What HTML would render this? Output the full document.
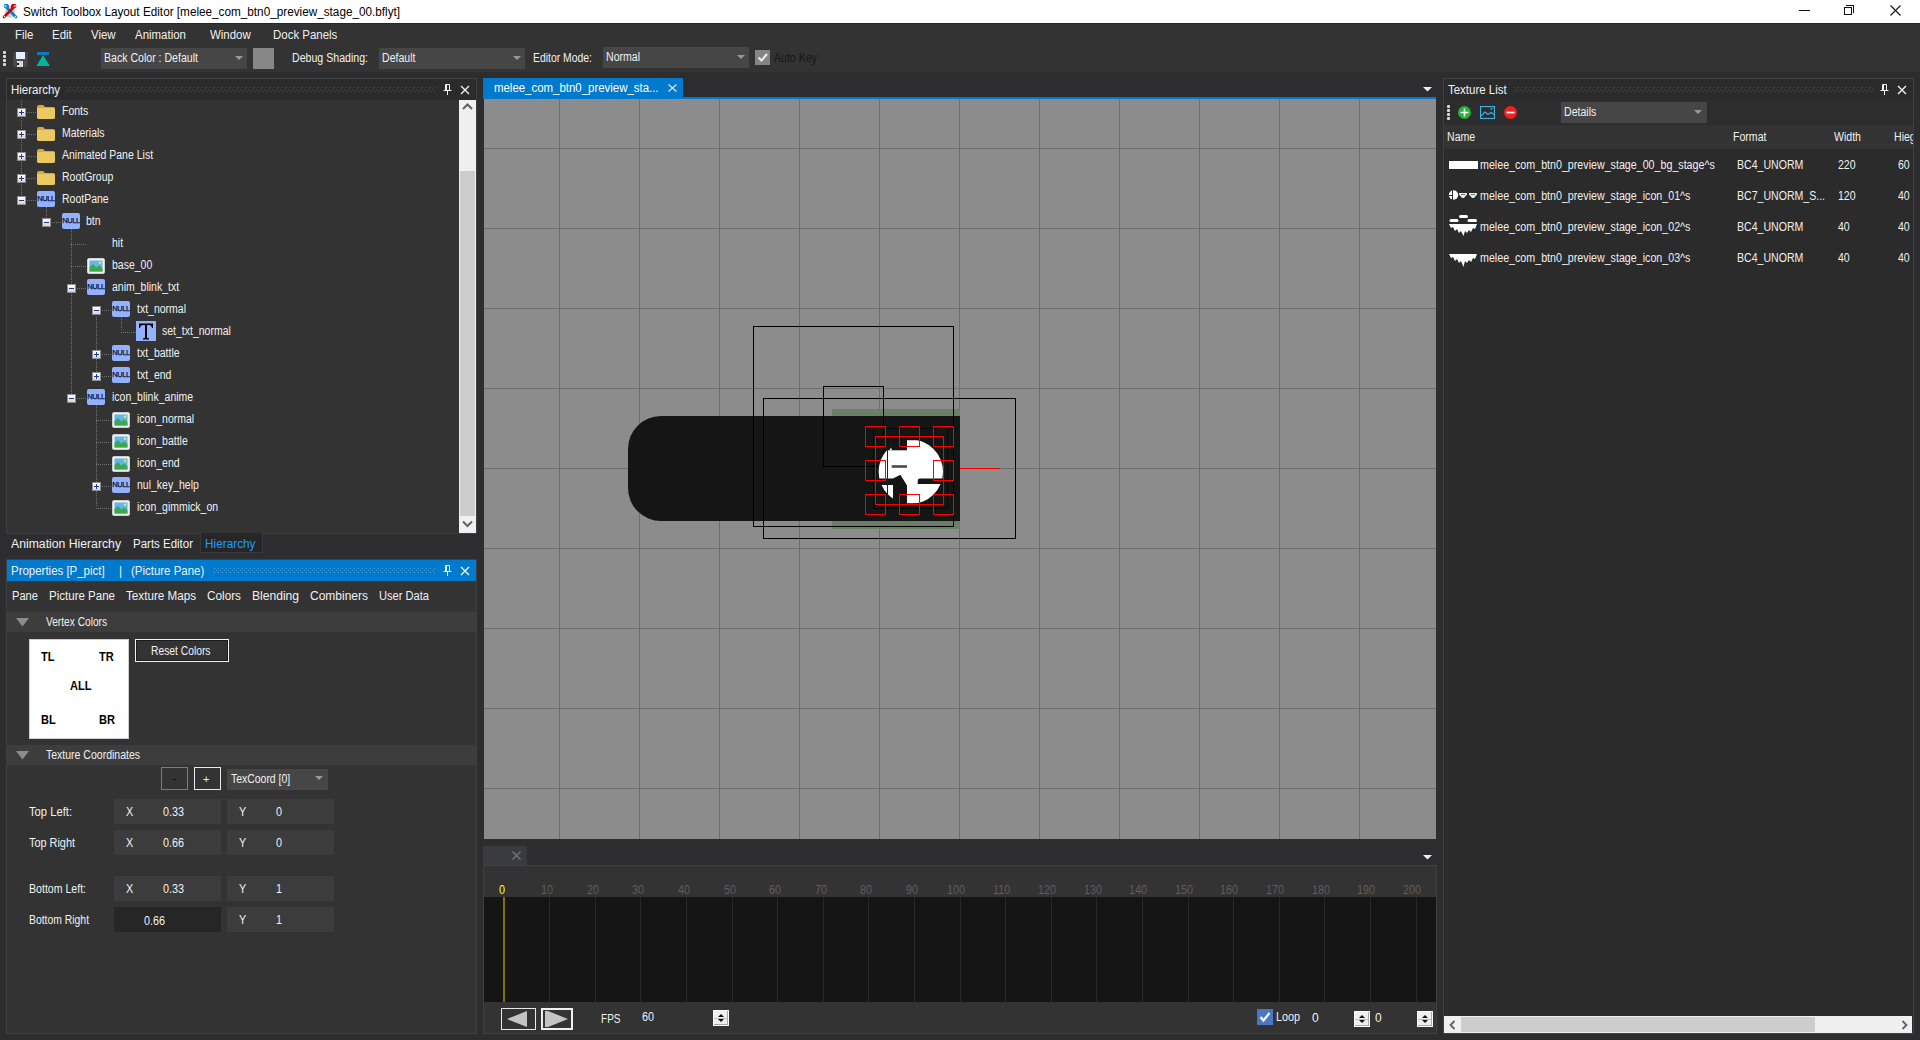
<!DOCTYPE html><html><head><meta charset="utf-8"><style>html,body{margin:0;padding:0;width:1920px;height:1040px;overflow:hidden;background:#2d2d30;font-family:"Liberation Sans",sans-serif;position:relative}body div{position:absolute;box-sizing:border-box}</style></head><body>
<div style="left:0px;top:0px;width:1920px;height:23px;background:#fff"></div>
<div style="left:23px;top:5.34px;line-height:15px;font-size:12px;color:#000;white-space:nowrap;transform:scaleX(0.9786);transform-origin:0 0;">Switch Toolbox Layout Editor [melee_com_btn0_preview_stage_00.bflyt]</div>
<svg style="position:absolute;left:0px;top:0px;" width="22" height="22" viewBox="0 0 22 22"><circle cx="10" cy="12.5" r="5.2" fill="#cfcfcf"/>
<path d="M6.5 7.5 L16 17" stroke="#0b80c9" stroke-width="2.6" stroke-linecap="round"/>
<path d="M3.5 6 L4.5 4 H8 L9.5 6.5 L8.5 9 L6 8.5 L4 7.5Z" fill="#0b8ad6"/><path d="M4 5.5 L6 5.5 L6.5 6.5 L5 7Z" fill="#fff"/>
<path d="M13.5 7.5 L4 17" stroke="#d40000" stroke-width="2.6" stroke-linecap="round"/>
<path d="M16.5 6 L15.5 4 H12 L10.5 6.5 L11.5 9 L14 8.5 L16 7.5Z" fill="#e00000"/><path d="M16 5.5 L14 5.5 L13.5 6.5 L15 7Z" fill="#fff"/>
<circle cx="4.5" cy="16.5" r="0.7" fill="#fff"/><circle cx="15.5" cy="16.5" r="0.7" fill="#fff"/></svg>
<div style="left:1799px;top:10px;width:11px;height:1px;background:#111"></div>
<div style="left:1844px;top:7px;width:8px;height:8px;border:1px solid #111"></div>
<div style="left:1846px;top:5px;width:8px;height:8px;border-top:1px solid #111;border-right:1px solid #111"></div>
<svg style="position:absolute;left:1890px;top:5px;" width="11" height="11" viewBox="0 0 11 11"><path d="M0.5 0.5 L10.5 10.5 M10.5 0.5 L0.5 10.5" stroke="#111" stroke-width="1.1"/></svg>
<div style="left:0px;top:23px;width:1920px;height:49px;background:#333333"></div>
<div style="left:0px;top:23px;width:1920px;height:1px;background:#262626"></div>
<div style="left:15px;top:28.34px;line-height:15px;font-size:12px;color:#f1f1f1;white-space:nowrap;transform:scaleX(0.9550);transform-origin:0 0;">File</div>
<div style="left:52px;top:28.34px;line-height:15px;font-size:12px;color:#f1f1f1;white-space:nowrap;transform:scaleX(0.9550);transform-origin:0 0;">Edit</div>
<div style="left:91px;top:28.34px;line-height:15px;font-size:12px;color:#f1f1f1;white-space:nowrap;transform:scaleX(0.9550);transform-origin:0 0;">View</div>
<div style="left:135px;top:28.34px;line-height:15px;font-size:12px;color:#f1f1f1;white-space:nowrap;transform:scaleX(0.9550);transform-origin:0 0;">Animation</div>
<div style="left:210px;top:28.34px;line-height:15px;font-size:12px;color:#f1f1f1;white-space:nowrap;transform:scaleX(0.9550);transform-origin:0 0;">Window</div>
<div style="left:273px;top:28.34px;line-height:15px;font-size:12px;color:#f1f1f1;white-space:nowrap;transform:scaleX(0.9550);transform-origin:0 0;">Dock Panels</div>
<div style="left:3px;top:51px;width:3px;height:3px;background:#ddd;border-radius:1px"></div>
<div style="left:3px;top:55px;width:3px;height:3px;background:#ddd;border-radius:1px"></div>
<div style="left:3px;top:59px;width:3px;height:3px;background:#ddd;border-radius:1px"></div>
<div style="left:3px;top:63px;width:3px;height:3px;background:#ddd;border-radius:1px"></div>
<svg style="position:absolute;left:13px;top:51px;" width="15" height="17" viewBox="0 0 15 17"><rect x="0.5" y="1" width="14" height="15" rx="1" fill="#4a4a4a"/>
<rect x="3" y="1" width="9" height="7" fill="#e6eefa"/><rect x="4" y="10" width="6" height="6" fill="#d8d8d8"/>
<rect x="4" y="12" width="2" height="2" fill="#222"/></svg>
<svg style="position:absolute;left:36px;top:51px;" width="15" height="17" viewBox="0 0 15 17"><rect x="1" y="1" width="12" height="3" fill="#0a7bbd"/><path d="M7 4 L14 15 L0.5 15Z" fill="#00b4a0"/></svg>
<div style="left:101px;top:48px;width:146px;height:21px;background:#464646"></div>
<div style="left:104px;top:51.34px;line-height:15px;font-size:12px;color:#f1f1f1;white-space:nowrap;transform:scaleX(0.8800);transform-origin:0 0;">Back Color : Default</div>
<svg style="position:absolute;left:235px;top:56px;" width="8" height="5" viewBox="0 0 8 5"><path d="M0 0 L8 0 L4 4Z" fill="#999"/></svg>
<div style="left:253px;top:48px;width:21px;height:21px;background:#878787"></div>
<div style="left:292px;top:51.34px;line-height:15px;font-size:12px;color:#f1f1f1;white-space:nowrap;transform:scaleX(0.8832);transform-origin:0 0;">Debug Shading:</div>
<div style="left:379px;top:48px;width:146px;height:21px;background:#464646"></div>
<div style="left:382px;top:51.34px;line-height:15px;font-size:12px;color:#f1f1f1;white-space:nowrap;transform:scaleX(0.8800);transform-origin:0 0;">Default</div>
<svg style="position:absolute;left:513px;top:56px;" width="8" height="5" viewBox="0 0 8 5"><path d="M0 0 L8 0 L4 4Z" fill="#999"/></svg>
<div style="left:533px;top:51.34px;line-height:15px;font-size:12px;color:#f1f1f1;white-space:nowrap;transform:scaleX(0.8674);transform-origin:0 0;">Editor Mode:</div>
<div style="left:603px;top:47px;width:146px;height:21px;background:#464646"></div>
<div style="left:606px;top:50.34px;line-height:15px;font-size:12px;color:#f1f1f1;white-space:nowrap;transform:scaleX(0.8800);transform-origin:0 0;">Normal</div>
<svg style="position:absolute;left:737px;top:55px;" width="8" height="5" viewBox="0 0 8 5"><path d="M0 0 L8 0 L4 4Z" fill="#999"/></svg>
<div style="left:755px;top:50px;width:15px;height:15px;background:#858585"></div>
<svg style="position:absolute;left:756px;top:51px;" width="13" height="13" viewBox="0 0 13 13"><path d="M2.5 6.5 L5.5 9.5 L11 3" stroke="#ececec" stroke-width="2" fill="none"/></svg>
<div style="left:774px;top:51.34px;line-height:15px;font-size:12px;color:#161616;white-space:nowrap;transform:scaleX(0.8800);transform-origin:0 0;">Auto Key</div>
<div style="left:6px;top:78px;width:471px;height:456px;border:1px solid #3f3f46;background:#333333"></div>
<div style="left:7px;top:79px;width:469px;height:21px;background:#2b2b2c"></div>
<div style="left:11px;top:83.34px;line-height:15px;font-size:12px;color:#f1f1f1;white-space:nowrap;transform:scaleX(0.9550);transform-origin:0 0;">Hierarchy</div>
<svg style="position:absolute;left:66px;top:87px;" width="370" height="5" viewBox="0 0 370 5"><defs><pattern id="p7_79" width="4" height="4" patternUnits="userSpaceOnUse"><rect x="0" y="0" width="1" height="1" fill="#505053"/><rect x="2" y="2" width="1" height="1" fill="#505053"/></pattern></defs><rect width="370" height="5" fill="url(#p7_79)"/></svg>
<svg style="position:absolute;left:443px;top:84px;" width="9" height="12" viewBox="0 0 9 12"><path d="M2.5 0.5 H6.5 V6.5 H2.5Z" fill="none" stroke="#f1f1f1"/><path d="M3.5 1 V6" stroke="#f1f1f1"/><path d="M0.5 6.5 H8.5" stroke="#f1f1f1"/><path d="M4.5 6.5 V11" stroke="#f1f1f1"/></svg>
<svg style="position:absolute;left:460px;top:85px;" width="10" height="10" viewBox="0 0 10 10"><path d="M1 1 L9 9 M9 1 L1 9" stroke="#f1f1f1" stroke-width="1.4"/></svg>
<div style="left:459px;top:100px;width:17px;height:433px;background:#f0f0f0"></div>
<div style="left:460px;top:171px;width:15px;height:345px;background:#cdcdcd"></div>
<svg style="position:absolute;left:462px;top:103px;" width="11" height="8" viewBox="0 0 11 8"><path d="M1 6 L5.5 1.5 L10 6" stroke="#606060" stroke-width="2" fill="none"/></svg>
<svg style="position:absolute;left:462px;top:520px;" width="11" height="8" viewBox="0 0 11 8"><path d="M1 1.5 L5.5 6 L10 1.5" stroke="#606060" stroke-width="2" fill="none"/></svg>
<div style="left:21px;top:100px;width:1px;height:100px;background-image:linear-gradient(to bottom,#727272 50%,transparent 50%);background-size:1px 2px"></div>
<div style="left:46px;top:207px;width:1px;height:14px;background-image:linear-gradient(to bottom,#727272 50%,transparent 50%);background-size:1px 2px"></div>
<div style="left:71px;top:229px;width:1px;height:168px;background-image:linear-gradient(to bottom,#727272 50%,transparent 50%);background-size:1px 2px"></div>
<div style="left:96px;top:317px;width:1px;height:58px;background-image:linear-gradient(to bottom,#727272 50%,transparent 50%);background-size:1px 2px"></div>
<div style="left:96px;top:405px;width:1px;height:102px;background-image:linear-gradient(to bottom,#727272 50%,transparent 50%);background-size:1px 2px"></div>
<div style="left:121px;top:317px;width:1px;height:14px;background-image:linear-gradient(to bottom,#727272 50%,transparent 50%);background-size:1px 2px"></div>
<div style="left:17px;top:108px;width:9px;height:9px;border:1px solid #8d8d8d;background:linear-gradient(#ffffff,#d6d6d6)"></div>
<div style="left:19px;top:112px;width:5px;height:1px;background:#1c3a9c"></div>
<div style="left:21px;top:110px;width:1px;height:5px;background:#1c3a9c"></div>
<div style="left:27px;top:112px;width:10px;height:1px;background-image:linear-gradient(to right,#727272 50%,transparent 50%);background-size:2px 1px"></div>
<svg style="position:absolute;left:37px;top:104px;" width="18" height="15" viewBox="0 0 18 15"><path d="M0 3 Q0 1 2 1 H6 L8 3 H16 Q18 3 18 5 V13 Q18 15 16 15 H2 Q0 15 0 13Z" fill="#e0a43a"/><path d="M0 5 Q0 4 1.5 4 H16.5 Q18 4 18 5.5 V13 Q18 15 16 15 H2 Q0 15 0 13Z" fill="#ebc862"/></svg>
<div style="left:62px;top:104.34px;line-height:15px;font-size:12px;color:#f1f1f1;white-space:nowrap;transform:scaleX(0.8750);transform-origin:0 0;">Fonts</div>
<div style="left:17px;top:130px;width:9px;height:9px;border:1px solid #8d8d8d;background:linear-gradient(#ffffff,#d6d6d6)"></div>
<div style="left:19px;top:134px;width:5px;height:1px;background:#1c3a9c"></div>
<div style="left:21px;top:132px;width:1px;height:5px;background:#1c3a9c"></div>
<div style="left:27px;top:134px;width:10px;height:1px;background-image:linear-gradient(to right,#727272 50%,transparent 50%);background-size:2px 1px"></div>
<svg style="position:absolute;left:37px;top:126px;" width="18" height="15" viewBox="0 0 18 15"><path d="M0 3 Q0 1 2 1 H6 L8 3 H16 Q18 3 18 5 V13 Q18 15 16 15 H2 Q0 15 0 13Z" fill="#e0a43a"/><path d="M0 5 Q0 4 1.5 4 H16.5 Q18 4 18 5.5 V13 Q18 15 16 15 H2 Q0 15 0 13Z" fill="#ebc862"/></svg>
<div style="left:62px;top:126.34px;line-height:15px;font-size:12px;color:#f1f1f1;white-space:nowrap;transform:scaleX(0.8750);transform-origin:0 0;">Materials</div>
<div style="left:17px;top:152px;width:9px;height:9px;border:1px solid #8d8d8d;background:linear-gradient(#ffffff,#d6d6d6)"></div>
<div style="left:19px;top:156px;width:5px;height:1px;background:#1c3a9c"></div>
<div style="left:21px;top:154px;width:1px;height:5px;background:#1c3a9c"></div>
<div style="left:27px;top:156px;width:10px;height:1px;background-image:linear-gradient(to right,#727272 50%,transparent 50%);background-size:2px 1px"></div>
<svg style="position:absolute;left:37px;top:148px;" width="18" height="15" viewBox="0 0 18 15"><path d="M0 3 Q0 1 2 1 H6 L8 3 H16 Q18 3 18 5 V13 Q18 15 16 15 H2 Q0 15 0 13Z" fill="#e0a43a"/><path d="M0 5 Q0 4 1.5 4 H16.5 Q18 4 18 5.5 V13 Q18 15 16 15 H2 Q0 15 0 13Z" fill="#ebc862"/></svg>
<div style="left:62px;top:148.34px;line-height:15px;font-size:12px;color:#f1f1f1;white-space:nowrap;transform:scaleX(0.8750);transform-origin:0 0;">Animated Pane List</div>
<div style="left:17px;top:174px;width:9px;height:9px;border:1px solid #8d8d8d;background:linear-gradient(#ffffff,#d6d6d6)"></div>
<div style="left:19px;top:178px;width:5px;height:1px;background:#1c3a9c"></div>
<div style="left:21px;top:176px;width:1px;height:5px;background:#1c3a9c"></div>
<div style="left:27px;top:178px;width:10px;height:1px;background-image:linear-gradient(to right,#727272 50%,transparent 50%);background-size:2px 1px"></div>
<svg style="position:absolute;left:37px;top:170px;" width="18" height="15" viewBox="0 0 18 15"><path d="M0 3 Q0 1 2 1 H6 L8 3 H16 Q18 3 18 5 V13 Q18 15 16 15 H2 Q0 15 0 13Z" fill="#e0a43a"/><path d="M0 5 Q0 4 1.5 4 H16.5 Q18 4 18 5.5 V13 Q18 15 16 15 H2 Q0 15 0 13Z" fill="#ebc862"/></svg>
<div style="left:62px;top:170.34px;line-height:15px;font-size:12px;color:#f1f1f1;white-space:nowrap;transform:scaleX(0.8750);transform-origin:0 0;">RootGroup</div>
<div style="left:17px;top:196px;width:9px;height:9px;border:1px solid #8d8d8d;background:linear-gradient(#ffffff,#d6d6d6)"></div>
<div style="left:19px;top:200px;width:5px;height:1px;background:#1c3a9c"></div>
<div style="left:27px;top:200px;width:10px;height:1px;background-image:linear-gradient(to right,#727272 50%,transparent 50%);background-size:2px 1px"></div>
<svg style="position:absolute;left:37px;top:191px;" width="18" height="16" viewBox="0 0 18 16"><rect x="0" y="0" width="18" height="16" rx="2" fill="#93b1ff"/><text x="9" y="9.8" text-anchor="middle" font-family="Liberation Sans" font-size="7.5" fill="#0a1236" letter-spacing="-0.4" stroke="#0a1236" stroke-width="0.25">NULL</text></svg>
<div style="left:62px;top:192.34px;line-height:15px;font-size:12px;color:#f1f1f1;white-space:nowrap;transform:scaleX(0.8750);transform-origin:0 0;">RootPane</div>
<div style="left:42px;top:218px;width:9px;height:9px;border:1px solid #8d8d8d;background:linear-gradient(#ffffff,#d6d6d6)"></div>
<div style="left:44px;top:222px;width:5px;height:1px;background:#1c3a9c"></div>
<div style="left:52px;top:222px;width:10px;height:1px;background-image:linear-gradient(to right,#727272 50%,transparent 50%);background-size:2px 1px"></div>
<svg style="position:absolute;left:62px;top:213px;" width="18" height="16" viewBox="0 0 18 16"><rect x="0" y="0" width="18" height="16" rx="2" fill="#93b1ff"/><text x="9" y="9.8" text-anchor="middle" font-family="Liberation Sans" font-size="7.5" fill="#0a1236" letter-spacing="-0.4" stroke="#0a1236" stroke-width="0.25">NULL</text></svg>
<div style="left:86px;top:214.34px;line-height:15px;font-size:12px;color:#f1f1f1;white-space:nowrap;transform:scaleX(0.8750);transform-origin:0 0;">btn</div>
<div style="left:71px;top:244px;width:16px;height:1px;background-image:linear-gradient(to right,#727272 50%,transparent 50%);background-size:2px 1px"></div>
<div style="left:112px;top:236.34px;line-height:15px;font-size:12px;color:#f1f1f1;white-space:nowrap;transform:scaleX(0.8750);transform-origin:0 0;">hit</div>
<div style="left:71px;top:266px;width:16px;height:1px;background-image:linear-gradient(to right,#727272 50%,transparent 50%);background-size:2px 1px"></div>
<svg style="position:absolute;left:87px;top:258px;" width="18" height="16" viewBox="0 0 18 16"><rect x="0.5" y="0.5" width="17" height="15" rx="1.5" fill="#f0f0f0" stroke="#cfcfcf"/><rect x="2.5" y="2.5" width="13" height="11" fill="#5fb7ea"/><path d="M2.5 13.5 V9 L6 6 L9 9.5 L12 7.5 L15.5 10 V13.5Z" fill="#3ea64e"/><circle cx="13" cy="4.8" r="1.3" fill="#f5e050"/></svg>
<div style="left:112px;top:258.34px;line-height:15px;font-size:12px;color:#f1f1f1;white-space:nowrap;transform:scaleX(0.8750);transform-origin:0 0;">base_00</div>
<div style="left:67px;top:284px;width:9px;height:9px;border:1px solid #8d8d8d;background:linear-gradient(#ffffff,#d6d6d6)"></div>
<div style="left:69px;top:288px;width:5px;height:1px;background:#1c3a9c"></div>
<div style="left:77px;top:288px;width:10px;height:1px;background-image:linear-gradient(to right,#727272 50%,transparent 50%);background-size:2px 1px"></div>
<svg style="position:absolute;left:87px;top:279px;" width="18" height="16" viewBox="0 0 18 16"><rect x="0" y="0" width="18" height="16" rx="2" fill="#93b1ff"/><text x="9" y="9.8" text-anchor="middle" font-family="Liberation Sans" font-size="7.5" fill="#0a1236" letter-spacing="-0.4" stroke="#0a1236" stroke-width="0.25">NULL</text></svg>
<div style="left:112px;top:280.34px;line-height:15px;font-size:12px;color:#f1f1f1;white-space:nowrap;transform:scaleX(0.8750);transform-origin:0 0;">anim_blink_txt</div>
<div style="left:92px;top:306px;width:9px;height:9px;border:1px solid #8d8d8d;background:linear-gradient(#ffffff,#d6d6d6)"></div>
<div style="left:94px;top:310px;width:5px;height:1px;background:#1c3a9c"></div>
<div style="left:102px;top:310px;width:10px;height:1px;background-image:linear-gradient(to right,#727272 50%,transparent 50%);background-size:2px 1px"></div>
<svg style="position:absolute;left:112px;top:301px;" width="18" height="16" viewBox="0 0 18 16"><rect x="0" y="0" width="18" height="16" rx="2" fill="#93b1ff"/><text x="9" y="9.8" text-anchor="middle" font-family="Liberation Sans" font-size="7.5" fill="#0a1236" letter-spacing="-0.4" stroke="#0a1236" stroke-width="0.25">NULL</text></svg>
<div style="left:137px;top:302.34px;line-height:15px;font-size:12px;color:#f1f1f1;white-space:nowrap;transform:scaleX(0.8750);transform-origin:0 0;">txt_normal</div>
<div style="left:121px;top:332px;width:16px;height:1px;background-image:linear-gradient(to right,#727272 50%,transparent 50%);background-size:2px 1px"></div>
<svg style="position:absolute;left:136px;top:321px;" width="20" height="20" viewBox="0 0 20 20"><rect width="20" height="20" fill="#93b1ff"/><path d="M3 2.5 H17 V7 H16 Q15.5 4 13 4 H11 V16.5 Q11 17.3 13 17.3 V18.5 H7 V17.3 Q9 17.3 9 16.5 V4 H7 Q4.5 4 4 7 H3Z" fill="#000"/></svg>
<div style="left:162px;top:324.34px;line-height:15px;font-size:12px;color:#f1f1f1;white-space:nowrap;transform:scaleX(0.8750);transform-origin:0 0;">set_txt_normal</div>
<div style="left:92px;top:350px;width:9px;height:9px;border:1px solid #8d8d8d;background:linear-gradient(#ffffff,#d6d6d6)"></div>
<div style="left:94px;top:354px;width:5px;height:1px;background:#1c3a9c"></div>
<div style="left:96px;top:352px;width:1px;height:5px;background:#1c3a9c"></div>
<div style="left:102px;top:354px;width:10px;height:1px;background-image:linear-gradient(to right,#727272 50%,transparent 50%);background-size:2px 1px"></div>
<svg style="position:absolute;left:112px;top:345px;" width="18" height="16" viewBox="0 0 18 16"><rect x="0" y="0" width="18" height="16" rx="2" fill="#93b1ff"/><text x="9" y="9.8" text-anchor="middle" font-family="Liberation Sans" font-size="7.5" fill="#0a1236" letter-spacing="-0.4" stroke="#0a1236" stroke-width="0.25">NULL</text></svg>
<div style="left:137px;top:346.34px;line-height:15px;font-size:12px;color:#f1f1f1;white-space:nowrap;transform:scaleX(0.8750);transform-origin:0 0;">txt_battle</div>
<div style="left:92px;top:372px;width:9px;height:9px;border:1px solid #8d8d8d;background:linear-gradient(#ffffff,#d6d6d6)"></div>
<div style="left:94px;top:376px;width:5px;height:1px;background:#1c3a9c"></div>
<div style="left:96px;top:374px;width:1px;height:5px;background:#1c3a9c"></div>
<div style="left:102px;top:376px;width:10px;height:1px;background-image:linear-gradient(to right,#727272 50%,transparent 50%);background-size:2px 1px"></div>
<svg style="position:absolute;left:112px;top:367px;" width="18" height="16" viewBox="0 0 18 16"><rect x="0" y="0" width="18" height="16" rx="2" fill="#93b1ff"/><text x="9" y="9.8" text-anchor="middle" font-family="Liberation Sans" font-size="7.5" fill="#0a1236" letter-spacing="-0.4" stroke="#0a1236" stroke-width="0.25">NULL</text></svg>
<div style="left:137px;top:368.34px;line-height:15px;font-size:12px;color:#f1f1f1;white-space:nowrap;transform:scaleX(0.8750);transform-origin:0 0;">txt_end</div>
<div style="left:67px;top:394px;width:9px;height:9px;border:1px solid #8d8d8d;background:linear-gradient(#ffffff,#d6d6d6)"></div>
<div style="left:69px;top:398px;width:5px;height:1px;background:#1c3a9c"></div>
<div style="left:77px;top:398px;width:10px;height:1px;background-image:linear-gradient(to right,#727272 50%,transparent 50%);background-size:2px 1px"></div>
<svg style="position:absolute;left:87px;top:389px;" width="18" height="16" viewBox="0 0 18 16"><rect x="0" y="0" width="18" height="16" rx="2" fill="#93b1ff"/><text x="9" y="9.8" text-anchor="middle" font-family="Liberation Sans" font-size="7.5" fill="#0a1236" letter-spacing="-0.4" stroke="#0a1236" stroke-width="0.25">NULL</text></svg>
<div style="left:112px;top:390.34px;line-height:15px;font-size:12px;color:#f1f1f1;white-space:nowrap;transform:scaleX(0.8750);transform-origin:0 0;">icon_blink_anime</div>
<div style="left:96px;top:420px;width:16px;height:1px;background-image:linear-gradient(to right,#727272 50%,transparent 50%);background-size:2px 1px"></div>
<svg style="position:absolute;left:112px;top:412px;" width="18" height="16" viewBox="0 0 18 16"><rect x="0.5" y="0.5" width="17" height="15" rx="1.5" fill="#f0f0f0" stroke="#cfcfcf"/><rect x="2.5" y="2.5" width="13" height="11" fill="#5fb7ea"/><path d="M2.5 13.5 V9 L6 6 L9 9.5 L12 7.5 L15.5 10 V13.5Z" fill="#3ea64e"/><circle cx="13" cy="4.8" r="1.3" fill="#f5e050"/></svg>
<div style="left:137px;top:412.34px;line-height:15px;font-size:12px;color:#f1f1f1;white-space:nowrap;transform:scaleX(0.8750);transform-origin:0 0;">icon_normal</div>
<div style="left:96px;top:442px;width:16px;height:1px;background-image:linear-gradient(to right,#727272 50%,transparent 50%);background-size:2px 1px"></div>
<svg style="position:absolute;left:112px;top:434px;" width="18" height="16" viewBox="0 0 18 16"><rect x="0.5" y="0.5" width="17" height="15" rx="1.5" fill="#f0f0f0" stroke="#cfcfcf"/><rect x="2.5" y="2.5" width="13" height="11" fill="#5fb7ea"/><path d="M2.5 13.5 V9 L6 6 L9 9.5 L12 7.5 L15.5 10 V13.5Z" fill="#3ea64e"/><circle cx="13" cy="4.8" r="1.3" fill="#f5e050"/></svg>
<div style="left:137px;top:434.34px;line-height:15px;font-size:12px;color:#f1f1f1;white-space:nowrap;transform:scaleX(0.8750);transform-origin:0 0;">icon_battle</div>
<div style="left:96px;top:464px;width:16px;height:1px;background-image:linear-gradient(to right,#727272 50%,transparent 50%);background-size:2px 1px"></div>
<svg style="position:absolute;left:112px;top:456px;" width="18" height="16" viewBox="0 0 18 16"><rect x="0.5" y="0.5" width="17" height="15" rx="1.5" fill="#f0f0f0" stroke="#cfcfcf"/><rect x="2.5" y="2.5" width="13" height="11" fill="#5fb7ea"/><path d="M2.5 13.5 V9 L6 6 L9 9.5 L12 7.5 L15.5 10 V13.5Z" fill="#3ea64e"/><circle cx="13" cy="4.8" r="1.3" fill="#f5e050"/></svg>
<div style="left:137px;top:456.34px;line-height:15px;font-size:12px;color:#f1f1f1;white-space:nowrap;transform:scaleX(0.8750);transform-origin:0 0;">icon_end</div>
<div style="left:92px;top:482px;width:9px;height:9px;border:1px solid #8d8d8d;background:linear-gradient(#ffffff,#d6d6d6)"></div>
<div style="left:94px;top:486px;width:5px;height:1px;background:#1c3a9c"></div>
<div style="left:96px;top:484px;width:1px;height:5px;background:#1c3a9c"></div>
<div style="left:102px;top:486px;width:10px;height:1px;background-image:linear-gradient(to right,#727272 50%,transparent 50%);background-size:2px 1px"></div>
<svg style="position:absolute;left:112px;top:477px;" width="18" height="16" viewBox="0 0 18 16"><rect x="0" y="0" width="18" height="16" rx="2" fill="#93b1ff"/><text x="9" y="9.8" text-anchor="middle" font-family="Liberation Sans" font-size="7.5" fill="#0a1236" letter-spacing="-0.4" stroke="#0a1236" stroke-width="0.25">NULL</text></svg>
<div style="left:137px;top:478.34px;line-height:15px;font-size:12px;color:#f1f1f1;white-space:nowrap;transform:scaleX(0.8750);transform-origin:0 0;">nul_key_help</div>
<div style="left:96px;top:508px;width:16px;height:1px;background-image:linear-gradient(to right,#727272 50%,transparent 50%);background-size:2px 1px"></div>
<svg style="position:absolute;left:112px;top:500px;" width="18" height="16" viewBox="0 0 18 16"><rect x="0.5" y="0.5" width="17" height="15" rx="1.5" fill="#f0f0f0" stroke="#cfcfcf"/><rect x="2.5" y="2.5" width="13" height="11" fill="#5fb7ea"/><path d="M2.5 13.5 V9 L6 6 L9 9.5 L12 7.5 L15.5 10 V13.5Z" fill="#3ea64e"/><circle cx="13" cy="4.8" r="1.3" fill="#f5e050"/></svg>
<div style="left:137px;top:500.34px;line-height:15px;font-size:12px;color:#f1f1f1;white-space:nowrap;transform:scaleX(0.8750);transform-origin:0 0;">icon_gimmick_on</div>
<div style="left:11px;top:537.34px;line-height:15px;font-size:12px;color:#f1f1f1;white-space:nowrap;transform:scaleX(1.0181);transform-origin:0 0;">Animation Hierarchy</div>
<div style="left:133px;top:537.34px;line-height:15px;font-size:12px;color:#f1f1f1;white-space:nowrap;transform:scaleX(0.9574);transform-origin:0 0;">Parts Editor</div>
<div style="left:200px;top:533px;width:63px;height:20px;background:#262628;border:1px solid #3a3a3e;border-top:none"></div>
<div style="left:205px;top:537.34px;line-height:15px;font-size:12px;color:#1a9cff;white-space:nowrap;transform:scaleX(0.9833);transform-origin:0 0;">Hierarchy</div>
<div style="left:6px;top:559px;width:471px;height:475px;border:1px solid #3f3f46;background:#333333"></div>
<div style="left:7px;top:560px;width:469px;height:21px;background:#007acc"></div>
<div style="left:11px;top:564.34px;line-height:15px;font-size:12px;color:#f1f1f1;white-space:nowrap;transform:scaleX(0.9550);transform-origin:0 0;">Properties [P_pict]</div>
<svg style="position:absolute;left:214px;top:568px;" width="221" height="5" viewBox="0 0 221 5"><defs><pattern id="p7_560" width="4" height="4" patternUnits="userSpaceOnUse"><rect x="0" y="0" width="1" height="1" fill="#4f9fe0"/><rect x="2" y="2" width="1" height="1" fill="#4f9fe0"/></pattern></defs><rect width="221" height="5" fill="url(#p7_560)"/></svg>
<svg style="position:absolute;left:443px;top:565px;" width="9" height="12" viewBox="0 0 9 12"><path d="M2.5 0.5 H6.5 V6.5 H2.5Z" fill="none" stroke="#f1f1f1"/><path d="M3.5 1 V6" stroke="#f1f1f1"/><path d="M0.5 6.5 H8.5" stroke="#f1f1f1"/><path d="M4.5 6.5 V11" stroke="#f1f1f1"/></svg>
<svg style="position:absolute;left:460px;top:566px;" width="10" height="10" viewBox="0 0 10 10"><path d="M1 1 L9 9 M9 1 L1 9" stroke="#f1f1f1" stroke-width="1.4"/></svg>
<div style="left:119px;top:564.34px;line-height:15px;font-size:12px;color:#f1f1f1;white-space:nowrap;">|</div>
<div style="left:131px;top:564.34px;line-height:15px;font-size:12px;color:#f1f1f1;white-space:nowrap;transform:scaleX(0.9550);transform-origin:0 0;">(Picture Pane)</div>
<div style="left:7px;top:581px;width:469px;height:31px;background:#333333"></div>
<div style="left:12px;top:589.34px;line-height:15px;font-size:12px;color:#f1f1f1;white-space:nowrap;transform:scaleX(0.9281);transform-origin:0 0;">Pane</div>
<div style="left:49px;top:589.34px;line-height:15px;font-size:12px;color:#f1f1f1;white-space:nowrap;transform:scaleX(0.9609);transform-origin:0 0;">Picture Pane</div>
<div style="left:126px;top:589.34px;line-height:15px;font-size:12px;color:#f1f1f1;white-space:nowrap;transform:scaleX(0.9720);transform-origin:0 0;">Texture Maps</div>
<div style="left:207px;top:589.34px;line-height:15px;font-size:12px;color:#f1f1f1;white-space:nowrap;transform:scaleX(0.9802);transform-origin:0 0;">Colors</div>
<div style="left:252px;top:589.34px;line-height:15px;font-size:12px;color:#f1f1f1;white-space:nowrap;transform:scaleX(1.0064);transform-origin:0 0;">Blending</div>
<div style="left:310px;top:589.34px;line-height:15px;font-size:12px;color:#f1f1f1;white-space:nowrap;transform:scaleX(0.9995);transform-origin:0 0;">Combiners</div>
<div style="left:379px;top:589.34px;line-height:15px;font-size:12px;color:#f1f1f1;white-space:nowrap;transform:scaleX(0.9257);transform-origin:0 0;">User Data</div>
<div style="left:7px;top:612px;width:469px;height:20px;background:#3d3d3d"></div>
<svg style="position:absolute;left:16px;top:618px;" width="13" height="9" viewBox="0 0 13 9"><path d="M0 0 H13 L6.5 8.5Z" fill="#8c8c8c"/></svg>
<div style="left:46px;top:615.34px;line-height:15px;font-size:12px;color:#f1f1f1;white-space:nowrap;transform:scaleX(0.8469);transform-origin:0 0;">Vertex Colors</div>
<div style="left:29px;top:639px;width:100px;height:100px;background:#fff;border:1px solid #d0d0d0"></div>
<div style="left:41px;top:650.34px;line-height:15px;font-size:12px;color:#000;white-space:nowrap;font-weight:bold;transform:scaleX(0.9200);transform-origin:0 0;">TL</div>
<div style="left:99px;top:650.34px;line-height:15px;font-size:12px;color:#000;white-space:nowrap;font-weight:bold;transform:scaleX(0.9200);transform-origin:0 0;">TR</div>
<div style="left:70px;top:679.34px;line-height:15px;font-size:12px;color:#000;white-space:nowrap;font-weight:bold;transform:scaleX(0.9200);transform-origin:0 0;">ALL</div>
<div style="left:41px;top:713.34px;line-height:15px;font-size:12px;color:#000;white-space:nowrap;font-weight:bold;transform:scaleX(0.9200);transform-origin:0 0;">BL</div>
<div style="left:99px;top:713.34px;line-height:15px;font-size:12px;color:#000;white-space:nowrap;font-weight:bold;transform:scaleX(0.9200);transform-origin:0 0;">BR</div>
<div style="left:135px;top:639px;width:94px;height:23px;border:1px solid #f0f0f0;box-shadow:inset 0 0 0 1px #1c1c1c"></div>
<div style="left:151px;top:644.34px;line-height:15px;font-size:12px;color:#f1f1f1;white-space:nowrap;transform:scaleX(0.8579);transform-origin:0 0;">Reset Colors</div>
<div style="left:7px;top:745px;width:469px;height:20px;background:#3d3d3d"></div>
<svg style="position:absolute;left:16px;top:751px;" width="13" height="9" viewBox="0 0 13 9"><path d="M0 0 H13 L6.5 8.5Z" fill="#8c8c8c"/></svg>
<div style="left:46px;top:748.34px;line-height:15px;font-size:12px;color:#f1f1f1;white-space:nowrap;transform:scaleX(0.8754);transform-origin:0 0;">Texture Coordinates</div>
<div style="left:161px;top:767px;width:27px;height:23px;border:1px solid #7c7c7c"></div>
<div style="left:173px;top:779px;width:3px;height:1px;background:#151515"></div>
<div style="left:194px;top:767px;width:27px;height:23px;border:1px solid #e8e8e8"></div>
<div style="left:203px;top:772.19px;line-height:14px;font-size:11px;color:#f1f1f1;white-space:nowrap;">+</div>
<div style="left:227px;top:769px;width:101px;height:21px;background:#464646"></div>
<div style="left:231px;top:772.34px;line-height:15px;font-size:12px;color:#f1f1f1;white-space:nowrap;transform:scaleX(0.8700);transform-origin:0 0;">TexCoord [0]</div>
<svg style="position:absolute;left:315px;top:776px;" width="8" height="5" viewBox="0 0 8 5"><path d="M0 0 L8 0 L4 4Z" fill="#999"/></svg>
<div style="left:29px;top:805.34px;line-height:15px;font-size:12px;color:#f1f1f1;white-space:nowrap;transform:scaleX(0.9348);transform-origin:0 0;">Top Left:</div>
<div style="left:114px;top:799px;width:107px;height:25px;background:#3c3c3c"></div>
<div style="left:126px;top:805.34px;line-height:15px;font-size:12px;color:#f1f1f1;white-space:nowrap;transform:scaleX(0.9000);transform-origin:0 0;">X</div>
<div style="left:163px;top:805.34px;line-height:15px;font-size:12px;color:#f1f1f1;white-space:nowrap;transform:scaleX(0.9000);transform-origin:0 0;">0.33</div>
<div style="left:227px;top:799px;width:107px;height:25px;background:#3c3c3c"></div>
<div style="left:239px;top:805.34px;line-height:15px;font-size:12px;color:#f1f1f1;white-space:nowrap;transform:scaleX(0.9000);transform-origin:0 0;">Y</div>
<div style="left:276px;top:805.34px;line-height:15px;font-size:12px;color:#f1f1f1;white-space:nowrap;transform:scaleX(0.9000);transform-origin:0 0;">0</div>
<div style="left:29px;top:836.34px;line-height:15px;font-size:12px;color:#f1f1f1;white-space:nowrap;transform:scaleX(0.9075);transform-origin:0 0;">Top Right</div>
<div style="left:114px;top:830px;width:107px;height:25px;background:#3c3c3c"></div>
<div style="left:126px;top:836.34px;line-height:15px;font-size:12px;color:#f1f1f1;white-space:nowrap;transform:scaleX(0.9000);transform-origin:0 0;">X</div>
<div style="left:163px;top:836.34px;line-height:15px;font-size:12px;color:#f1f1f1;white-space:nowrap;transform:scaleX(0.9000);transform-origin:0 0;">0.66</div>
<div style="left:227px;top:830px;width:107px;height:25px;background:#3c3c3c"></div>
<div style="left:239px;top:836.34px;line-height:15px;font-size:12px;color:#f1f1f1;white-space:nowrap;transform:scaleX(0.9000);transform-origin:0 0;">Y</div>
<div style="left:276px;top:836.34px;line-height:15px;font-size:12px;color:#f1f1f1;white-space:nowrap;transform:scaleX(0.9000);transform-origin:0 0;">0</div>
<div style="left:29px;top:882.34px;line-height:15px;font-size:12px;color:#f1f1f1;white-space:nowrap;transform:scaleX(0.8816);transform-origin:0 0;">Bottom Left:</div>
<div style="left:114px;top:876px;width:107px;height:25px;background:#3c3c3c"></div>
<div style="left:126px;top:882.34px;line-height:15px;font-size:12px;color:#f1f1f1;white-space:nowrap;transform:scaleX(0.9000);transform-origin:0 0;">X</div>
<div style="left:163px;top:882.34px;line-height:15px;font-size:12px;color:#f1f1f1;white-space:nowrap;transform:scaleX(0.9000);transform-origin:0 0;">0.33</div>
<div style="left:227px;top:876px;width:107px;height:25px;background:#3c3c3c"></div>
<div style="left:239px;top:882.34px;line-height:15px;font-size:12px;color:#f1f1f1;white-space:nowrap;transform:scaleX(0.9000);transform-origin:0 0;">Y</div>
<div style="left:276px;top:882.34px;line-height:15px;font-size:12px;color:#f1f1f1;white-space:nowrap;transform:scaleX(0.9000);transform-origin:0 0;">1</div>
<div style="left:29px;top:913.34px;line-height:15px;font-size:12px;color:#f1f1f1;white-space:nowrap;transform:scaleX(0.8653);transform-origin:0 0;">Bottom Right</div>
<div style="left:114px;top:907px;width:107px;height:25px;background:#262626"></div>
<div style="left:144px;top:914.34px;line-height:15px;font-size:12px;color:#f1f1f1;white-space:nowrap;transform:scaleX(0.9000);transform-origin:0 0;">0.66</div>
<div style="left:227px;top:907px;width:107px;height:25px;background:#3c3c3c"></div>
<div style="left:239px;top:913.34px;line-height:15px;font-size:12px;color:#f1f1f1;white-space:nowrap;transform:scaleX(0.9000);transform-origin:0 0;">Y</div>
<div style="left:276px;top:913.34px;line-height:15px;font-size:12px;color:#f1f1f1;white-space:nowrap;transform:scaleX(0.9000);transform-origin:0 0;">1</div>
<div style="left:483px;top:78px;width:200px;height:21px;background:#007acc"></div>
<div style="left:483px;top:97px;width:953px;height:2px;background:#007acc"></div>
<div style="left:494px;top:81.34px;line-height:15px;font-size:12px;color:#ffffff;white-space:nowrap;transform:scaleX(0.9523);transform-origin:0 0;">melee_com_btn0_preview_sta...</div>
<svg style="position:absolute;left:668px;top:84px;" width="9" height="8" viewBox="0 0 9 8"><path d="M0.5 0.5 L8.5 7.5 M8.5 0.5 L0.5 7.5" stroke="#d0e4f5" stroke-width="1.3"/></svg>
<svg style="position:absolute;left:1423px;top:87px;" width="9" height="5" viewBox="0 0 9 5"><path d="M0 0 H9 L4.5 4.5Z" fill="#f1f1f1"/></svg>
<div style="left:484px;top:99px;width:952px;height:740px;background-color:#8c8c8c;background-image:linear-gradient(to right,#6f6f6f 1px,transparent 1px),linear-gradient(to bottom,#6f6f6f 1px,transparent 1px);background-size:80px 80px;background-position:75px 49px;overflow:hidden"></div>
<div style="left:832px;top:409px;width:128px;height:120px;background:#6b7f68"></div>
<div style="left:628px;top:416px;width:332px;height:105px;background:#151515;border-radius:33px 0 0 33px"></div>
<div style="left:753px;top:326px;width:201px;height:201px;border:1px solid #000"></div>
<div style="left:823px;top:386px;width:61px;height:81px;border:1px solid #000"></div>
<div style="left:763px;top:398px;width:253px;height:141px;border:1px solid #000"></div>
<div style="left:873px;top:428px;width:75px;height:81px;border:1px solid #080808"></div>
<svg style="position:absolute;left:876px;top:437px;" width="70" height="70" viewBox="0 0 70 70"><defs><clipPath id="cp"><rect x="0" y="3.2" width="70" height="63"/></clipPath></defs>
<g clip-path="url(#cp)"><circle cx="34.8" cy="34.7" r="32.2" fill="#fff"/></g>
<path d="M0 0 H31 V13.3 H0Z" fill="#151515"/>
<path d="M13.5 13.3 L15 10.4 L16 13.3Z" fill="#fff"/>
<rect x="15.7" y="28.2" width="15.3" height="2.6" fill="#4a4a4a"/>
<path d="M0 41.6 H17 L24.4 37.8 L31 48.4 V70 H17 V48 H0Z" fill="#151515"/>
<path d="M6 48 H16 L14.8 60Z" fill="#fff"/>
<path d="M44 41.6 H70 V47 H41.7 V44 Q41.7 41.6 44 41.6Z" fill="#151515"/>
<rect x="11" y="11" width="1" height="49" fill="#222"/></svg>
<div style="left:865px;top:426px;width:21px;height:21px;border:1px solid #ff0000"></div>
<div style="left:865px;top:460px;width:21px;height:21px;border:1px solid #ff0000"></div>
<div style="left:865px;top:494px;width:21px;height:21px;border:1px solid #ff0000"></div>
<div style="left:899px;top:426px;width:21px;height:21px;border:1px solid #ff0000"></div>
<div style="left:899px;top:494px;width:21px;height:21px;border:1px solid #ff0000"></div>
<div style="left:933px;top:426px;width:21px;height:21px;border:1px solid #ff0000"></div>
<div style="left:933px;top:460px;width:21px;height:21px;border:1px solid #ff0000"></div>
<div style="left:933px;top:494px;width:21px;height:21px;border:1px solid #ff0000"></div>
<div style="left:875px;top:436px;width:69px;height:69px;border:1px solid #ff0000"></div>
<div style="left:960px;top:468px;width:40px;height:1px;background:#ff0000"></div>
<div style="left:483px;top:846px;width:44px;height:19px;background:#3a3b40"></div>
<svg style="position:absolute;left:512px;top:851px;" width="9" height="9" viewBox="0 0 9 9"><path d="M0.5 0.5 L8.5 8.5 M8.5 0.5 L0.5 8.5" stroke="#777" stroke-width="1.2"/></svg>
<svg style="position:absolute;left:1423px;top:855px;" width="9" height="5" viewBox="0 0 9 5"><path d="M0 0 H9 L4.5 4.5Z" fill="#f1f1f1"/></svg>
<div style="left:483px;top:865px;width:954px;height:169px;border:1px solid #3f3f46;background:#333333"></div>
<div style="left:484px;top:897px;width:952px;height:105px;background:#151515"></div>
<div style="left:498.5px;top:883.34px;line-height:15px;font-size:12px;color:#ffff1a;white-space:nowrap;transform:scaleX(0.9000);transform-origin:0 0;">0</div>
<div style="left:549px;top:897px;width:1px;height:105px;background:#2a2a2a"></div>
<div style="left:541.1px;top:883.34px;line-height:15px;font-size:12px;color:#5e5e5e;white-space:nowrap;transform:scaleX(0.9000);transform-origin:0 0;">10</div>
<div style="left:595px;top:897px;width:1px;height:105px;background:#2a2a2a"></div>
<div style="left:586.7px;top:883.34px;line-height:15px;font-size:12px;color:#5e5e5e;white-space:nowrap;transform:scaleX(0.9000);transform-origin:0 0;">20</div>
<div style="left:640px;top:897px;width:1px;height:105px;background:#2a2a2a"></div>
<div style="left:632.3px;top:883.34px;line-height:15px;font-size:12px;color:#5e5e5e;white-space:nowrap;transform:scaleX(0.9000);transform-origin:0 0;">30</div>
<div style="left:686px;top:897px;width:1px;height:105px;background:#2a2a2a"></div>
<div style="left:677.9px;top:883.34px;line-height:15px;font-size:12px;color:#5e5e5e;white-space:nowrap;transform:scaleX(0.9000);transform-origin:0 0;">40</div>
<div style="left:732px;top:897px;width:1px;height:105px;background:#2a2a2a"></div>
<div style="left:723.5px;top:883.34px;line-height:15px;font-size:12px;color:#5e5e5e;white-space:nowrap;transform:scaleX(0.9000);transform-origin:0 0;">50</div>
<div style="left:777px;top:897px;width:1px;height:105px;background:#2a2a2a"></div>
<div style="left:769.1px;top:883.34px;line-height:15px;font-size:12px;color:#5e5e5e;white-space:nowrap;transform:scaleX(0.9000);transform-origin:0 0;">60</div>
<div style="left:823px;top:897px;width:1px;height:105px;background:#2a2a2a"></div>
<div style="left:814.7px;top:883.34px;line-height:15px;font-size:12px;color:#5e5e5e;white-space:nowrap;transform:scaleX(0.9000);transform-origin:0 0;">70</div>
<div style="left:868px;top:897px;width:1px;height:105px;background:#2a2a2a"></div>
<div style="left:860.3px;top:883.34px;line-height:15px;font-size:12px;color:#5e5e5e;white-space:nowrap;transform:scaleX(0.9000);transform-origin:0 0;">80</div>
<div style="left:914px;top:897px;width:1px;height:105px;background:#2a2a2a"></div>
<div style="left:905.9px;top:883.34px;line-height:15px;font-size:12px;color:#5e5e5e;white-space:nowrap;transform:scaleX(0.9000);transform-origin:0 0;">90</div>
<div style="left:960px;top:897px;width:1px;height:105px;background:#2a2a2a"></div>
<div style="left:946.7px;top:883.34px;line-height:15px;font-size:12px;color:#5e5e5e;white-space:nowrap;transform:scaleX(0.9000);transform-origin:0 0;">100</div>
<div style="left:1005px;top:897px;width:1px;height:105px;background:#2a2a2a"></div>
<div style="left:992.7px;top:883.34px;line-height:15px;font-size:12px;color:#5e5e5e;white-space:nowrap;transform:scaleX(0.9000);transform-origin:0 0;">110</div>
<div style="left:1051px;top:897px;width:1px;height:105px;background:#2a2a2a"></div>
<div style="left:1037.9px;top:883.34px;line-height:15px;font-size:12px;color:#5e5e5e;white-space:nowrap;transform:scaleX(0.9000);transform-origin:0 0;">120</div>
<div style="left:1096px;top:897px;width:1px;height:105px;background:#2a2a2a"></div>
<div style="left:1083.5px;top:883.34px;line-height:15px;font-size:12px;color:#5e5e5e;white-space:nowrap;transform:scaleX(0.9000);transform-origin:0 0;">130</div>
<div style="left:1142px;top:897px;width:1px;height:105px;background:#2a2a2a"></div>
<div style="left:1129.1px;top:883.34px;line-height:15px;font-size:12px;color:#5e5e5e;white-space:nowrap;transform:scaleX(0.9000);transform-origin:0 0;">140</div>
<div style="left:1188px;top:897px;width:1px;height:105px;background:#2a2a2a"></div>
<div style="left:1174.7px;top:883.34px;line-height:15px;font-size:12px;color:#5e5e5e;white-space:nowrap;transform:scaleX(0.9000);transform-origin:0 0;">150</div>
<div style="left:1233px;top:897px;width:1px;height:105px;background:#2a2a2a"></div>
<div style="left:1220.3px;top:883.34px;line-height:15px;font-size:12px;color:#5e5e5e;white-space:nowrap;transform:scaleX(0.9000);transform-origin:0 0;">160</div>
<div style="left:1279px;top:897px;width:1px;height:105px;background:#2a2a2a"></div>
<div style="left:1265.9px;top:883.34px;line-height:15px;font-size:12px;color:#5e5e5e;white-space:nowrap;transform:scaleX(0.9000);transform-origin:0 0;">170</div>
<div style="left:1324px;top:897px;width:1px;height:105px;background:#2a2a2a"></div>
<div style="left:1311.5px;top:883.34px;line-height:15px;font-size:12px;color:#5e5e5e;white-space:nowrap;transform:scaleX(0.9000);transform-origin:0 0;">180</div>
<div style="left:1370px;top:897px;width:1px;height:105px;background:#2a2a2a"></div>
<div style="left:1357.1px;top:883.34px;line-height:15px;font-size:12px;color:#5e5e5e;white-space:nowrap;transform:scaleX(0.9000);transform-origin:0 0;">190</div>
<div style="left:1416px;top:897px;width:1px;height:105px;background:#2a2a2a"></div>
<div style="left:1402.7px;top:883.34px;line-height:15px;font-size:12px;color:#5e5e5e;white-space:nowrap;transform:scaleX(0.9000);transform-origin:0 0;">200</div>
<div style="left:503px;top:897px;width:2px;height:105px;background:#7a7400"></div>
<div style="left:501px;top:1008px;width:35px;height:22px;border:1px solid #e8e8e8"></div>
<svg style="position:absolute;left:506px;top:1010px;" width="23" height="18" viewBox="0 0 23 18"><path d="M1 9 L21 1 V17Z" fill="#c4c4c4"/><rect x="21" y="1" width="1" height="16" fill="#333"/></svg>
<div style="left:541px;top:1008px;width:32px;height:22px;border:2px solid #f0f0f0"></div>
<svg style="position:absolute;left:543px;top:1010px;" width="28" height="18" viewBox="0 0 28 18"><rect x="2" y="1" width="3" height="16" fill="#c4c4c4"/><path d="M5 1 L25 9 L5 17Z" fill="#c4c4c4"/></svg>
<div style="left:601px;top:1012.34px;line-height:15px;font-size:12px;color:#f1f1f1;white-space:nowrap;transform:scaleX(0.8359);transform-origin:0 0;">FPS</div>
<div style="left:642px;top:1010.34px;line-height:15px;font-size:12px;color:#f1f1f1;white-space:nowrap;transform:scaleX(0.8993);transform-origin:0 0;">60</div>
<div style="left:713px;top:1010px;width:16px;height:16px;background:#efefef;border:1px solid #fafafa;box-shadow:inset -1px -1px 0 #a8a8a8"></div>
<div style="left:714px;top:1018px;width:13px;height:1px;background:#c0c0c0"></div>
<svg style="position:absolute;left:718px;top:1014px;" width="6" height="3" viewBox="0 0 6 3"><path d="M0 3 L3 0 L6 3Z" fill="#111"/></svg>
<svg style="position:absolute;left:718px;top:1019px;" width="6" height="3" viewBox="0 0 6 3"><path d="M0 0 L6 0 L3 3Z" fill="#111"/></svg>
<div style="left:1257px;top:1009px;width:16px;height:16px;background:#4a77c4"></div>
<svg style="position:absolute;left:1258px;top:1010px;" width="14" height="14" viewBox="0 0 14 14"><path d="M2.5 7 L5.5 10.5 L11.5 3" stroke="#fff" stroke-width="2.2" fill="none"/></svg>
<div style="left:1276px;top:1010.34px;line-height:15px;font-size:12px;color:#f1f1f1;white-space:nowrap;transform:scaleX(0.9000);transform-origin:0 0;">Loop</div>
<div style="left:1312px;top:1011.34px;line-height:15px;font-size:12px;color:#f1f1f1;white-space:nowrap;">0</div>
<div style="left:1354px;top:1011px;width:16px;height:16px;background:#efefef;border:1px solid #fafafa;box-shadow:inset -1px -1px 0 #a8a8a8"></div>
<div style="left:1355px;top:1019px;width:13px;height:1px;background:#c0c0c0"></div>
<svg style="position:absolute;left:1359px;top:1015px;" width="6" height="3" viewBox="0 0 6 3"><path d="M0 3 L3 0 L6 3Z" fill="#111"/></svg>
<svg style="position:absolute;left:1359px;top:1020px;" width="6" height="3" viewBox="0 0 6 3"><path d="M0 0 L6 0 L3 3Z" fill="#111"/></svg>
<div style="left:1375px;top:1011.34px;line-height:15px;font-size:12px;color:#f1f1f1;white-space:nowrap;">0</div>
<div style="left:1417px;top:1011px;width:16px;height:16px;background:#efefef;border:1px solid #fafafa;box-shadow:inset -1px -1px 0 #a8a8a8"></div>
<div style="left:1418px;top:1019px;width:13px;height:1px;background:#c0c0c0"></div>
<svg style="position:absolute;left:1422px;top:1015px;" width="6" height="3" viewBox="0 0 6 3"><path d="M0 3 L3 0 L6 3Z" fill="#111"/></svg>
<svg style="position:absolute;left:1422px;top:1020px;" width="6" height="3" viewBox="0 0 6 3"><path d="M0 0 L6 0 L3 3Z" fill="#111"/></svg>
<div style="left:1443px;top:78px;width:471px;height:956px;border:1px solid #3f3f46;background:#2b2b2b"></div>
<div style="left:1444px;top:79px;width:469px;height:21px;background:#2b2b2c"></div>
<div style="left:1448px;top:83.34px;line-height:15px;font-size:12px;color:#f1f1f1;white-space:nowrap;transform:scaleX(0.9550);transform-origin:0 0;">Texture List</div>
<svg style="position:absolute;left:1514px;top:87px;" width="360" height="5" viewBox="0 0 360 5"><defs><pattern id="p1444_79" width="4" height="4" patternUnits="userSpaceOnUse"><rect x="0" y="0" width="1" height="1" fill="#505053"/><rect x="2" y="2" width="1" height="1" fill="#505053"/></pattern></defs><rect width="360" height="5" fill="url(#p1444_79)"/></svg>
<svg style="position:absolute;left:1880px;top:84px;" width="9" height="12" viewBox="0 0 9 12"><path d="M2.5 0.5 H6.5 V6.5 H2.5Z" fill="none" stroke="#f1f1f1"/><path d="M3.5 1 V6" stroke="#f1f1f1"/><path d="M0.5 6.5 H8.5" stroke="#f1f1f1"/><path d="M4.5 6.5 V11" stroke="#f1f1f1"/></svg>
<svg style="position:absolute;left:1897px;top:85px;" width="10" height="10" viewBox="0 0 10 10"><path d="M1 1 L9 9 M9 1 L1 9" stroke="#f1f1f1" stroke-width="1.4"/></svg>
<div style="left:1444px;top:100px;width:469px;height:25px;background:#2d2d2d"></div>
<div style="left:1447px;top:105px;width:3px;height:3px;background:#ddd;border-radius:1px"></div>
<div style="left:1447px;top:109px;width:3px;height:3px;background:#ddd;border-radius:1px"></div>
<div style="left:1447px;top:113px;width:3px;height:3px;background:#ddd;border-radius:1px"></div>
<div style="left:1447px;top:117px;width:3px;height:3px;background:#ddd;border-radius:1px"></div>
<svg style="position:absolute;left:1457px;top:105px;" width="15" height="15" viewBox="0 0 15 15"><circle cx="7.5" cy="7.5" r="6.5" fill="#27b03a"/><path d="M7.5 3.5 V11.5 M3.5 7.5 H11.5" stroke="#fff" stroke-width="1.6"/></svg>
<svg style="position:absolute;left:1480px;top:106px;" width="15" height="13" viewBox="0 0 15 13"><rect x="0.5" y="0.5" width="14" height="12" fill="none" stroke="#3fb3e6" stroke-width="1.2"/><path d="M1 10 L5 6 L8 8.5 L11 6.5 L14 8.5" fill="none" stroke="#3fb3e6" stroke-width="1.1"/><path d="M10.5 3.5 L12.5 2" stroke="#3fb3e6" stroke-width="1.2"/></svg>
<svg style="position:absolute;left:1503px;top:105px;" width="15" height="15" viewBox="0 0 15 15"><circle cx="7.5" cy="7.5" r="6.5" fill="#f02020"/><path d="M3.5 7.5 H11.5" stroke="#fff" stroke-width="1.8"/></svg>
<div style="left:1561px;top:102px;width:146px;height:21px;background:#464646"></div>
<div style="left:1564px;top:105.34px;line-height:15px;font-size:12px;color:#f1f1f1;white-space:nowrap;transform:scaleX(0.8800);transform-origin:0 0;">Details</div>
<svg style="position:absolute;left:1694px;top:110px;" width="8" height="5" viewBox="0 0 8 5"><path d="M0 0 L8 0 L4 4Z" fill="#999"/></svg>
<div style="left:1444px;top:125px;width:469px;height:24px;background:#333333"></div>
<div style="left:1447px;top:130.34px;line-height:15px;font-size:12px;color:#f1f1f1;white-space:nowrap;transform:scaleX(0.8800);transform-origin:0 0;">Name</div>
<div style="left:1733px;top:130.34px;line-height:15px;font-size:12px;color:#f1f1f1;white-space:nowrap;transform:scaleX(0.8800);transform-origin:0 0;">Format</div>
<div style="left:1834px;top:130.34px;line-height:15px;font-size:12px;color:#f1f1f1;white-space:nowrap;transform:scaleX(0.8800);transform-origin:0 0;">Width</div>
<div style="left:1444px;top:125px;width:469px;height:24px;overflow:hidden">
<div style="left:450px;top:5.34px;line-height:15px;font-size:12px;color:#f1f1f1;white-space:nowrap;transform:scaleX(0.8800);transform-origin:0 0;">Hieg</div>
</div>
<div style="left:1479.5px;top:158.34px;line-height:15px;font-size:12px;color:#f1f1f1;white-space:nowrap;transform:scaleX(0.8900);transform-origin:0 0;">melee_com_btn0_preview_stage_00_bg_stage^s</div>
<div style="left:1737px;top:158.34px;line-height:15px;font-size:12px;color:#f1f1f1;white-space:nowrap;transform:scaleX(0.8800);transform-origin:0 0;">BC4_UNORM</div>
<div style="left:1838px;top:158.34px;line-height:15px;font-size:12px;color:#f1f1f1;white-space:nowrap;transform:scaleX(0.8800);transform-origin:0 0;">220</div>
<div style="left:1898px;top:158.34px;line-height:15px;font-size:12px;color:#f1f1f1;white-space:nowrap;transform:scaleX(0.8800);transform-origin:0 0;">60</div>
<div style="left:1479.5px;top:189.34px;line-height:15px;font-size:12px;color:#f1f1f1;white-space:nowrap;transform:scaleX(0.8900);transform-origin:0 0;">melee_com_btn0_preview_stage_icon_01^s</div>
<div style="left:1737px;top:189.34px;line-height:15px;font-size:12px;color:#f1f1f1;white-space:nowrap;transform:scaleX(0.8800);transform-origin:0 0;">BC7_UNORM_S...</div>
<div style="left:1838px;top:189.34px;line-height:15px;font-size:12px;color:#f1f1f1;white-space:nowrap;transform:scaleX(0.8800);transform-origin:0 0;">120</div>
<div style="left:1898px;top:189.34px;line-height:15px;font-size:12px;color:#f1f1f1;white-space:nowrap;transform:scaleX(0.8800);transform-origin:0 0;">40</div>
<div style="left:1479.5px;top:220.34px;line-height:15px;font-size:12px;color:#f1f1f1;white-space:nowrap;transform:scaleX(0.8900);transform-origin:0 0;">melee_com_btn0_preview_stage_icon_02^s</div>
<div style="left:1737px;top:220.34px;line-height:15px;font-size:12px;color:#f1f1f1;white-space:nowrap;transform:scaleX(0.8800);transform-origin:0 0;">BC4_UNORM</div>
<div style="left:1838px;top:220.34px;line-height:15px;font-size:12px;color:#f1f1f1;white-space:nowrap;transform:scaleX(0.8800);transform-origin:0 0;">40</div>
<div style="left:1898px;top:220.34px;line-height:15px;font-size:12px;color:#f1f1f1;white-space:nowrap;transform:scaleX(0.8800);transform-origin:0 0;">40</div>
<div style="left:1479.5px;top:251.34px;line-height:15px;font-size:12px;color:#f1f1f1;white-space:nowrap;transform:scaleX(0.8900);transform-origin:0 0;">melee_com_btn0_preview_stage_icon_03^s</div>
<div style="left:1737px;top:251.34px;line-height:15px;font-size:12px;color:#f1f1f1;white-space:nowrap;transform:scaleX(0.8800);transform-origin:0 0;">BC4_UNORM</div>
<div style="left:1838px;top:251.34px;line-height:15px;font-size:12px;color:#f1f1f1;white-space:nowrap;transform:scaleX(0.8800);transform-origin:0 0;">40</div>
<div style="left:1898px;top:251.34px;line-height:15px;font-size:12px;color:#f1f1f1;white-space:nowrap;transform:scaleX(0.8800);transform-origin:0 0;">40</div>
<div style="left:1449px;top:161px;width:29px;height:8px;background:#fff"></div>
<svg style="position:absolute;left:1448px;top:188px;" width="30" height="14" viewBox="0 0 30 14"><circle cx="5.5" cy="7" r="4.7" fill="#fff"/><rect x="4" y="2" width="1" height="10" fill="#2b2b2b"/><rect x="1" y="7" width="3" height="1" fill="#2b2b2b"/><path d="M11 5 H19 V6.5 L16 10 H14 L11 6.5Z M21 5 H29 V6.5 L26 10 H24 L21 6.5Z" fill="#e8e8e8"/><rect x="13" y="6" width="4" height="1" fill="#777"/><rect x="23" y="6" width="4" height="1" fill="#777"/></svg>
<svg style="position:absolute;left:1448px;top:214px;" width="30" height="24" viewBox="0 0 30 24"><rect x="11" y="1" width="9" height="3" rx="1.5" fill="#fff"/><rect x="1.5" y="5" width="9" height="3" rx="1.5" fill="#fff"/><rect x="19.5" y="5" width="9.5" height="3" rx="1.5" fill="#fff"/><path d="M1 10 H29 L27 15 L25 14 L23 18 L21 16 L19 19 L17 17 L15.5 22 L13 17 L11 19 L9 15 L7 17 L5 13 L3 14Z" fill="#fff"/></svg>
<svg style="position:absolute;left:1448px;top:253px;" width="30" height="16" viewBox="0 0 30 16"><path d="M1 1 H29 L27 6 L25 5 L23 9 L21 7 L19 10 L17 8 L15.5 14 L13 8 L11 10 L9 6 L7 8 L5 4 L3 5Z" fill="#fff"/></svg>
<div style="left:1444px;top:1016px;width:468px;height:17px;background:#f0f0f0"></div>
<div style="left:1461px;top:1017px;width:354px;height:15px;background:#cdcdcd"></div>
<svg style="position:absolute;left:1449px;top:1020px;" width="7" height="10" viewBox="0 0 7 10"><path d="M5.5 1 L1.5 5 L5.5 9" stroke="#606060" stroke-width="1.8" fill="none"/></svg>
<svg style="position:absolute;left:1901px;top:1020px;" width="7" height="10" viewBox="0 0 7 10"><path d="M1.5 1 L5.5 5 L1.5 9" stroke="#606060" stroke-width="1.8" fill="none"/></svg>
</body></html>
